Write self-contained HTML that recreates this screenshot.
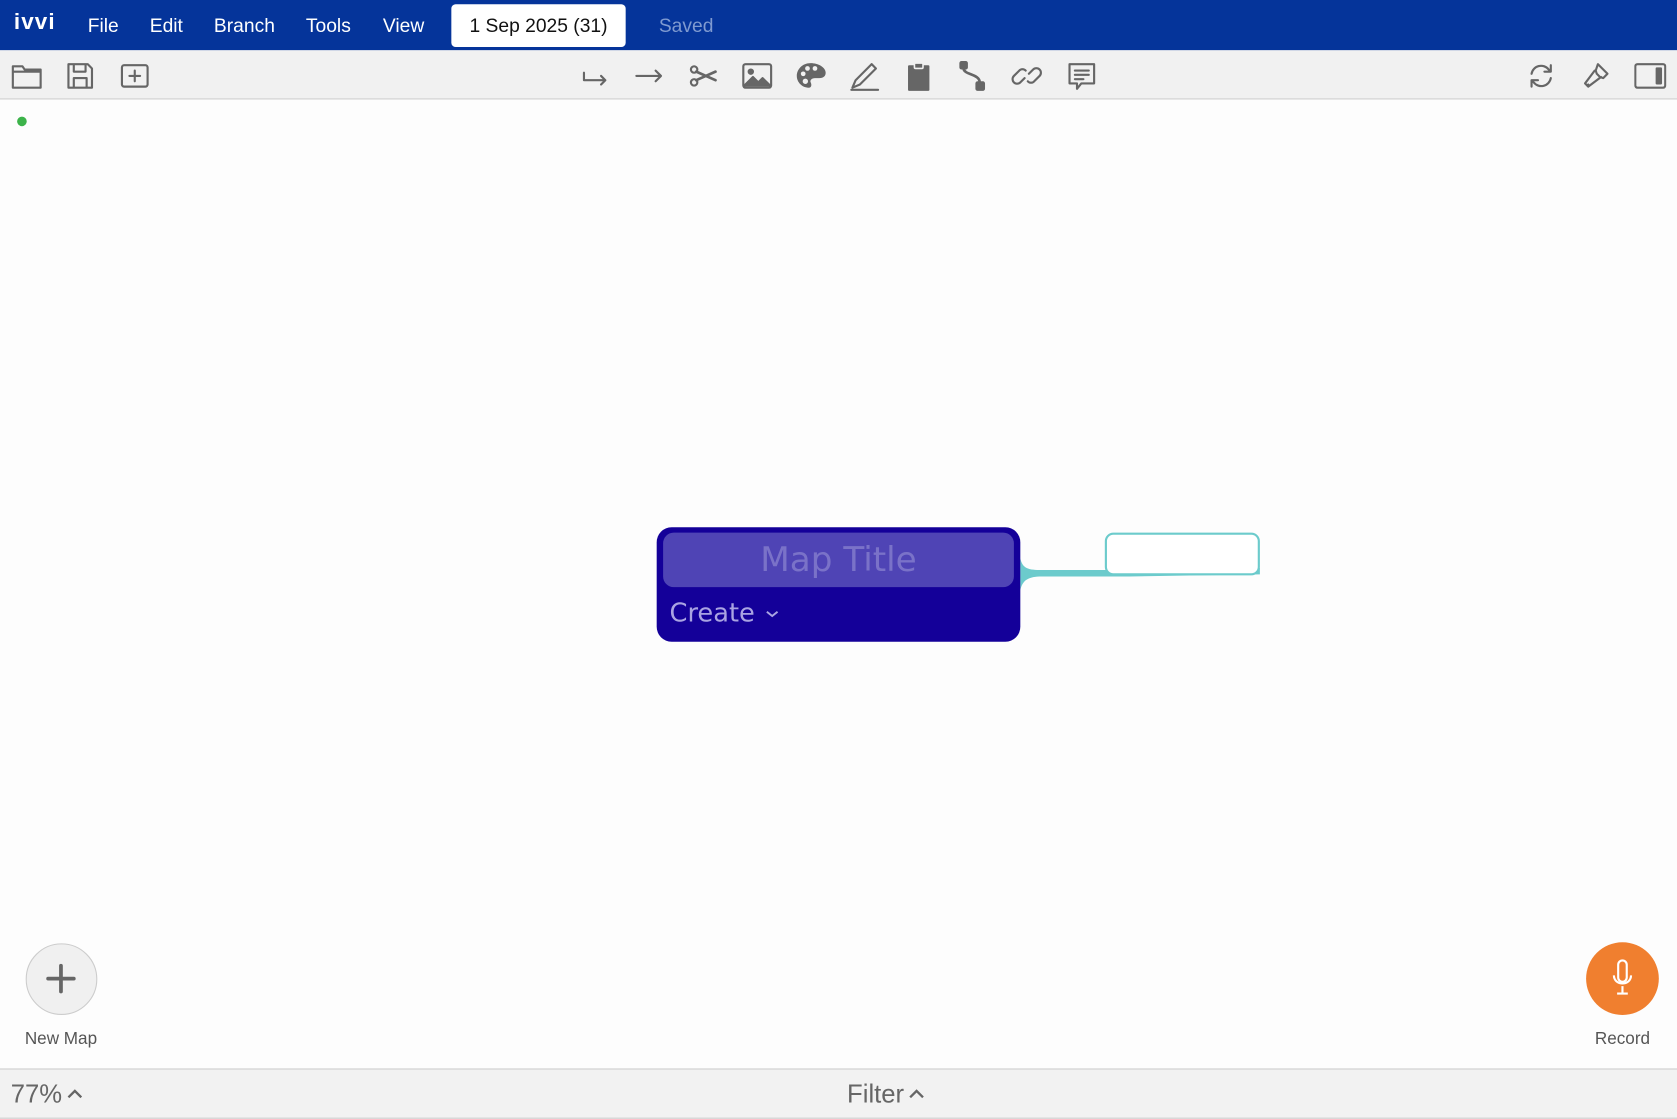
<!DOCTYPE html>
<html><head><meta charset="utf-8"><style>
*{margin:0;padding:0;box-sizing:border-box}
html,body{width:1677px;height:1119px;overflow:hidden;background:#fdfdfd;font-family:"Liberation Sans",sans-serif}
#w{position:absolute;left:0;top:0;width:1568px;height:1046px;transform:scale(1.06952);transform-origin:0 0}
.a{position:absolute}
#hd{left:0;top:0;width:1568px;height:47px;background:#05349a;color:#fff;font-size:18px}
#hd span{position:absolute;top:14px}
#tb{left:0;top:47px;width:1568px;height:46px;background:#f1f1f1;border-bottom:1px solid #cfcfcf}
#tb svg{position:absolute;top:9px;width:30px;height:30px;fill:none;stroke:#666;stroke-width:2;stroke-linecap:round;stroke-linejoin:round}
#bb{left:0;top:999px;width:1568px;height:47px;background:#f2f2f2;border-top:1px solid #ccc;border-bottom:1px solid #ccc;color:#666;font-size:24px}
.cv{display:inline-block;vertical-align:middle;margin-left:4px;margin-top:-4px}
</style></head><body><div id="w">
<div id="hd" class="a">
<span style="left:13px;top:9px;font-weight:bold;font-size:21px;letter-spacing:1px">ivvi</span>
<span style="left:82px">File</span><span style="left:140px">Edit</span><span style="left:200px">Branch</span><span style="left:286px">Tools</span><span style="left:358px">View</span>
<div class="a" style="left:422px;top:4px;width:163px;height:40px;background:#fff;border-radius:4px;color:#111;text-align:center;line-height:40px">1 Sep 2025 (31)</div>
<span style="left:616px;color:#7f9ad0">Saved</span>
</div>
<div id="tb" class="a">
<svg style="left:10px" viewBox="0 0 30 30"><path d="M2 6h9l2 3h15v17H2z M2 11h26"/></svg>
<svg style="left:60px" viewBox="0 0 30 30"><path d="M4 4h18l4 4v18H4z M9 4v7h11V4 M9 26v-9h12v9"/></svg>
<svg style="left:111px" viewBox="0 0 30 30"><rect x="3" y="5" width="24" height="20" rx="2"/><path d="M15 10v10M10 15h10"/></svg>
<svg style="left:542px" viewBox="0 0 30 30"><path d="M4 12v7h20M20 15l4 4-4 4"/></svg>
<svg style="left:592px" viewBox="0 0 30 30"><path d="M3 15h23M21 10l5 5-5 5"/></svg>
<svg style="left:642px" viewBox="0 0 30 30"><circle cx="7" cy="9" r="3"/><circle cx="7" cy="21" r="3"/><path d="M9 11l18 8M9 19l18-8" stroke-width="2.5"/></svg>
<svg style="left:693px" viewBox="0 0 30 30"><rect x="2" y="4" width="26" height="22" rx="2"/><circle cx="9" cy="11" r="2" fill="#666"/><path d="M3 24l8-8 5 5 4-4 7 7z" fill="#666"/></svg>
<svg style="left:743px" viewBox="0 0 30 30"><path d="M15 3C7 3 2 9 2 15s5 11 11 11c3 0 3-3 2-5s1-4 4-4h4c4 0 6-2 6-5C29 7 22 3 15 3z" fill="#666" stroke="none"/><circle cx="8" cy="13" r="2.2" fill="#f1f1f1" stroke="none"/><circle cx="12" cy="8" r="2.2" fill="#f1f1f1" stroke="none"/><circle cx="19" cy="8" r="2.2" fill="#f1f1f1" stroke="none"/><circle cx="10" cy="20" r="2.5" fill="#f1f1f1" stroke="none"/></svg>
<svg style="left:793px" viewBox="0 0 30 30"><path d="M4 26l3-7L22 4l4 4-15 15z M3 28h25"/></svg>
<svg style="left:844px" viewBox="0 0 30 30"><path d="M6 6h18v22H6z" fill="#666"/><rect x="11" y="3" width="8" height="5" rx="1" fill="#666" stroke="#f1f1f1" stroke-width="1.5"/></svg>
<svg style="left:894px" viewBox="0 0 30 30"><rect x="4" y="2" width="6" height="6" rx="1" fill="#666"/><rect x="19" y="21" width="7" height="7" rx="1" fill="#666"/><path d="M7 8c0 6 15 5 15 13" stroke-width="2.5"/></svg>
<svg style="left:945px" viewBox="0 0 30 30"><path d="M13 17l-4 4a4 4 0 01-6-6l5-5a4 4 0 016 0M17 13l4-4a4 4 0 016 6l-5 5a4 4 0 01-6 0"/></svg>
<svg style="left:996px" viewBox="0 0 30 30"><path d="M4 4h23v18H15l-4 5v-5H4z M9 10h13M9 14h13M9 18h8"/></svg>
<svg style="left:1426px" viewBox="0 0 30 30"><path d="M6 13a9 9 0 0116-4l2 2M24 17a9 9 0 01-16 4l-2-2M24 5v6h-6M6 25v-6h6"/></svg>
<svg style="left:1477px" viewBox="0 0 30 30"><path d="M17 4l9 9-4 4-3-1-3-3-1-3zM14 10l-9 12 3 3 12-9M7 24l1-1"/></svg>
<svg style="left:1528px" viewBox="0 0 30 30"><rect x="1" y="4" width="28" height="22" rx="2"/><rect x="21" y="8" width="4" height="14" fill="#666"/></svg>
</div>
<div class="a" style="left:16px;top:109px;width:9px;height:9px;border-radius:50%;background:#3cb34a"></div>
<svg class="a" style="left:940px;top:490px" width="250" height="80"><path d="M14 32c2 10 8 11 20 11h82l122-2v6l-122 2H34c-12 0-18 3-20 13z" fill="#6ccbcc"/></svg>
<div class="a" style="left:1033px;top:498px;width:145px;height:40px;border:2px solid #6ccbcc;border-radius:8px;background:#fff"></div>
<div class="a" style="left:614px;top:493px;width:340px;height:107px;background:#140099;border-radius:14px"></div>
<div class="a" style="left:620px;top:498px;width:328px;height:51px;background:#4f44b5;border-radius:10px;color:#7a72c8;font-size:32px;text-align:center;line-height:51px;font-family:'DejaVu Sans',sans-serif">Map Title</div>
<div class="a" style="left:626px;top:559px;color:#aaa4e2;font-size:24px;font-family:'DejaVu Sans',sans-serif">Create <svg width="14" height="10" style="vertical-align:middle;margin-left:2px"><path d="M2 3l5 4 5-4" fill="none" stroke="#aaa4e2" stroke-width="1.8"/></svg></div>
<div class="a" style="left:24px;top:882px;width:67px;height:67px;border-radius:50%;background:#f0f0f0;border:1px solid #ccc"></div>
<svg class="a" style="left:42px;top:900px" width="30" height="30"><path d="M15 3v24M3 15h24" stroke="#666" stroke-width="3.5" stroke-linecap="round"/></svg>
<div class="a" style="left:0;top:963px;width:114px;text-align:center;color:#555;font-size:16px">New Map</div>
<div class="a" style="left:1483px;top:881px;width:68px;height:68px;border-radius:50%;background:#f07f2f"></div>
<svg class="a" style="left:1502px;top:896px" width="30" height="40" fill="none" stroke="#fff" stroke-width="2"><rect x="11" y="2" width="8" height="20" rx="4"/><path d="M7 16c0 10 16 10 16 0M15 26v6M10 33h10"/></svg>
<div class="a" style="left:1467px;top:963px;width:100px;text-align:center;color:#555;font-size:16px">Record</div>
<div id="bb" class="a">
<span class="a" style="left:10px;top:10px">77%<svg class="cv" width="16" height="12"><path d="M2 9l6-6 6 6" fill="none" stroke="#666" stroke-width="2.2"/></svg></span>
<span class="a" style="left:792px;top:10px">Filter<svg class="cv" width="16" height="12"><path d="M2 9l6-6 6 6" fill="none" stroke="#666" stroke-width="2.2"/></svg></span>
</div>
</div></body></html>
